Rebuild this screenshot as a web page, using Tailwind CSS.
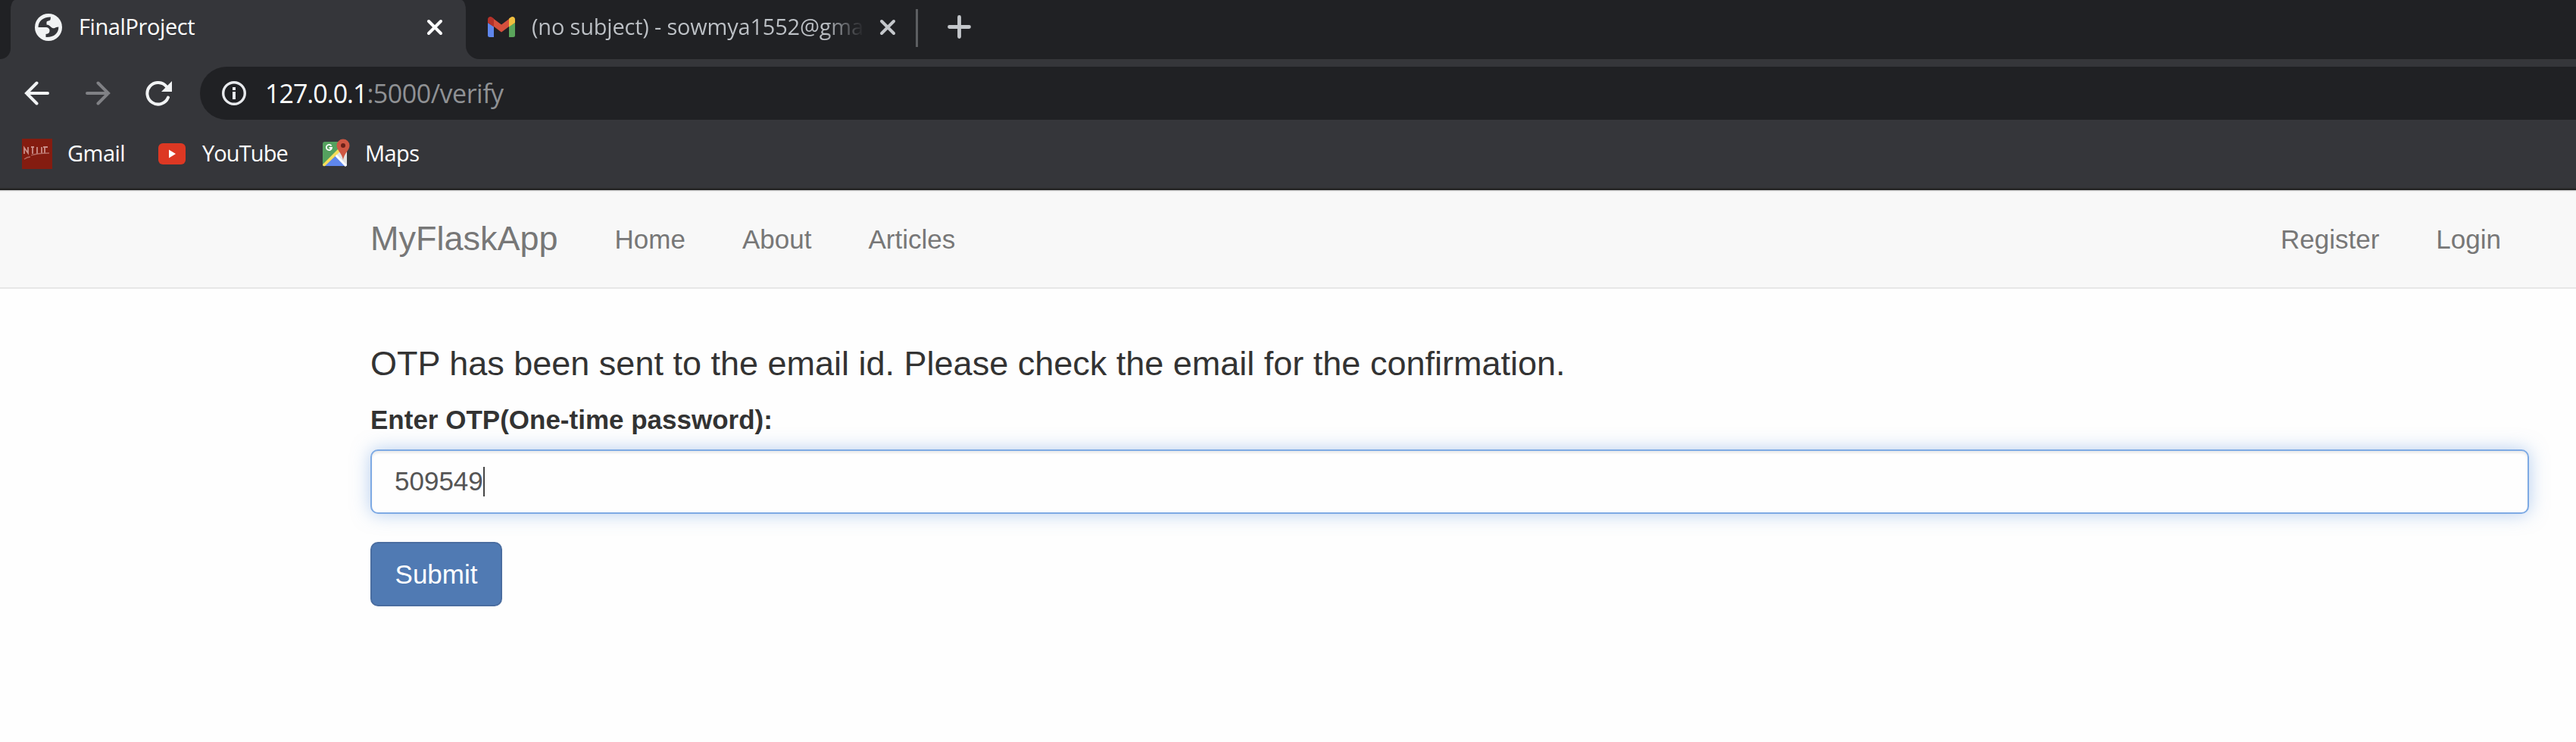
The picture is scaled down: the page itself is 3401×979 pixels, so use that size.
<!DOCTYPE html>
<html lang="en"><head><meta charset="utf-8"><title>FinalProject</title>
<script src="https://cdn.jsdelivr.net/npm/@tailwindcss/browser@4"></script></head>
<body class="w-[3401px] h-[979px] overflow-hidden bg-[#fefefe] font-['Liberation_Sans',Arial,sans-serif]">
<header class="h-[251px] bg-[#35363a] border-b-[3px] border-[#292929] text-white font-['Open_Sans',sans-serif]">
  <!-- tab strip -->
  <div class="h-[78px] flex bg-[#202124]">
    <div class="w-[14px] bg-[#35363a]"><div class="h-full bg-[#202124] rounded-br-[18px]"></div></div>
    <div class="w-[601px] h-full bg-[#35363a] rounded-tl-[6px_14px] rounded-tr-[6px_14px] flex items-center pl-[32px] pr-[30px]">
      <svg class="w-[36px] h-[36px] shrink-0 mt-[-6px]" viewBox="0 0 36 36"><circle cx="18" cy="18" r="18" fill="#f1f3f4"/><path d="M4.500 18C4.500 10 11 4.300 21 4.500L20.500 8C20 9.500 16 9.500 15.500 11L15.500 14.500C19 15 20.500 17 22 18.300C24 19.800 26 19.500 28 18L31.300 17.500C31.500 26 25 31.500 14.500 31L14.500 27C18.500 26.500 19.500 25 19.500 22C19.500 19.500 17 18 14 18Z" fill="#35363a"/></svg>
      <span class="ml-[22px] text-[29px] leading-[40px] mt-[-8px] tracking-[-0.4px]">FinalProject</span>
      <svg class="ml-auto w-[22px] h-[22px] mt-[-7px]" viewBox="0 0 22 22"><path d="M3 3L19 19M19 3L3 19" stroke="#fff" stroke-width="4" stroke-linecap="round"/></svg>
    </div>
    <div class="flex-1 bg-[#35363a]"><div class="h-full bg-[#202124] rounded-bl-[18px] flex items-center pl-[29px]">
      <svg class="w-[36px] h-[27px] mt-[-7px]" viewBox="0 0 36 27"><path d="M0 8V24.500Q0 27 2.500 27H8V13Z" fill="#5f87ec"/><path d="M36 8V24.500Q36 27 33.500 27H28V13Z" fill="#5aa55b"/><path d="M8 3L18 10.500L28 3V13L18 20.500L8 13Z" fill="#d5503d"/><path d="M0 8V4Q0 0 4 0Q6 .5 8 2.500V13.500L0 8Z" fill="#b4322a"/><path d="M36 8V4Q36 0 32 0Q30 .5 28 2.500V13.500L36 8Z" fill="#f0bf3f"/></svg>
      <span class="ml-[22px] w-[440px] whitespace-nowrap text-[29px] leading-[40px] mt-[-8px] bg-linear-to-r from-[#bdc1c6] from-88% to-[#202124] bg-clip-text text-transparent tracking-[-0.2px]">(no subject) - sowmya1552@gma</span>
      <svg class="ml-[19px] w-[22px] h-[22px] mt-[-7px]" viewBox="0 0 22 22"><path d="M3 3L19 19M19 3L3 19" stroke="#c4c7cb" stroke-width="4" stroke-linecap="round"/></svg>
      <div class="ml-[26px] w-[3px] h-[50px] mt-[-4px] bg-[#5c5e61]"></div>
      <svg class="ml-[39px] w-[31px] h-[31px] mt-[-7px]" viewBox="0 0 31 31"><path d="M2.500 15.500H28.500M15.500 2.500V28.500" stroke="#c4c7cb" stroke-width="4.800" stroke-linecap="round"/></svg>
    </div></div>
  </div>
  <!-- toolbar -->
  <div class="h-[90px] flex items-center pl-[32px]">
    <svg class="w-[34px] h-[32px] shrink-0" viewBox="0 0 34 32"><path d="M31 16H3M16.500 2.500L3 16L16.500 29.500" fill="none" stroke="#f1f3f4" stroke-width="4" stroke-linecap="round"/></svg>
    <svg class="ml-[46px] w-[34px] h-[32px] shrink-0" viewBox="0 0 34 32"><path d="M3 16H31M17.500 2.500L31 16L17.500 29.500" fill="none" stroke="#808185" stroke-width="4" stroke-linecap="round"/></svg>
    <svg class="ml-[46px] w-[36px] h-[33px] shrink-0" viewBox="0 0 36 33"><path d="M28 7.500A14.300 14.300 0 1 0 30 21.500" fill="none" stroke="#f1f3f4" stroke-width="4" stroke-linecap="round"/><path d="M35 0V14H21Z" fill="#f1f3f4"/></svg>
    <div class="ml-[36px] h-[70px] flex-1 bg-[#202124] rounded-l-full flex items-center pl-[29px]">
      <svg class="w-[32px] h-[32px]" viewBox="0 0 32 32"><circle cx="16" cy="16" r="14.300" fill="none" stroke="#e8eaed" stroke-width="3.400"/><path d="M14 14h4v10h-4zM14 8h4v4h-4z" fill="#e8eaed"/></svg>
      <span class="ml-[25px] text-[34px] leading-[40px] tracking-[-1px]">127.0.0.1<span class="text-[#8f9194] tracking-[-0.5px]">:5000/verify</span></span>
    </div>
  </div>
  <!-- bookmarks -->
  <div class="h-[70px] flex items-center pl-[29px] text-[29px] leading-[40px]">
    <svg class="w-[40px] h-[40px] shrink-0" viewBox="0 0 40 40"><path fill="#841c10" d="M0 0h40v40H0z"/><path d="M3 20V12L8 19V11M14 11V20M12 11H16M20 11V20M26 11V20M30 11V20M28 11H34" fill="none" stroke="#c98f89" stroke-width="1.800"/><path d="M12 22Q20 19 36 19M3 27Q7 24 11 24" fill="none" stroke="#b56c64" stroke-width="1.300"/></svg>
    <span class="ml-[20px] w-[119px] mt-[-3px] tracking-[-0.5px]">Gmail</span>
    <svg class="ml-px w-[36px] h-[28px] shrink-0" viewBox="0 0 36 28"><rect width="36" height="28" rx="6" fill="#dd3823"/><path d="M14 8.500L23 14L14 19.500Z" fill="#fff"/></svg>
    <span class="ml-[22px] w-[159px] mt-[-3px] tracking-[-0.9px]">YouTube</span>
    <svg class="w-[36px] h-[37px] shrink-0 mt-[-3px]" viewBox="0 0 36 37"><rect y="4" width="32" height="32" rx="3" fill="#55a15f"/><path d="M17 20L32 36H2Z" fill="#5f87ec"/><path d="M22 14L32 10V36L17 21Z" fill="#e2e2e2"/><path d="M0 34L21 13L24 16L3 36Q0 37 0 34Z" fill="#f6de5b"/><path d="M17.500 22L31 36" stroke="#fff" stroke-width="3"/><path d="M11.500 9.500A3.600 3.600 0 1 0 12 12H8.500" fill="none" stroke="#fff" stroke-width="1.800"/><path d="M27 28C26 20 18.500 15 18.500 9A8.500 8.500 0 0 1 35.500 9C35.500 15 28 20 27 28Z" fill="#cf5743"/><circle cx="27" cy="9" r="3" fill="#6b2118"/></svg>
    <span class="ml-[20px] mt-[-3px] tracking-[-0.6px]">Maps</span>
  </div>
</header>
<nav class="h-[130px] flex items-center border-y-2 border-[#e7e7e7] bg-[#f8f8f8] text-[#777] text-[35px] leading-[50px] pl-[489px] pr-[99px]">
  <span class="text-[45px] mt-[-2px]">MyFlaskApp</span>
  <span class="ml-[75px] mt-[-1px]">Home</span><span class="ml-[75px] mt-[-1px]">About</span><span class="ml-[75px] mt-[-1px]">Articles</span>
  <span class="ml-auto mt-[-1px]">Register</span><span class="ml-[75px] mt-[-1px]">Login</span>
</nav>
<main class="pl-[489px] pr-[62px] pt-[74px] text-[#333]">
  <h4 class="text-[45px] leading-[50px]">OTP has been sent to the email id. Please check the email for the confirmation.</h4>
  <div class="mt-[24px] text-[35px] leading-[50px] font-bold">Enter OTP(One-time password):</div>
  <div class="mt-[14px] h-[85px] flex items-center rounded-[10px] border-2 border-[#7eaae4] bg-[#fefefe] pl-[30px] text-[35px] leading-[50px] text-[#555] shadow-[inset_0_3px_3px_rgba(0,0,0,0.075),0_0_24px_rgba(110,160,225,0.5)]"><span class="mt-[-1px]">509549</span><span class="w-[2px] h-[39px] mt-[-1px] bg-[#444]"></span></div>
  <button class="mt-[37px] w-[174px] h-[85px] block rounded-[10px] border-2 border-[#4a6da0] bg-[#507ab3] text-[35px] leading-[50px] text-white">Submit</button>
</main>
</body></html>
